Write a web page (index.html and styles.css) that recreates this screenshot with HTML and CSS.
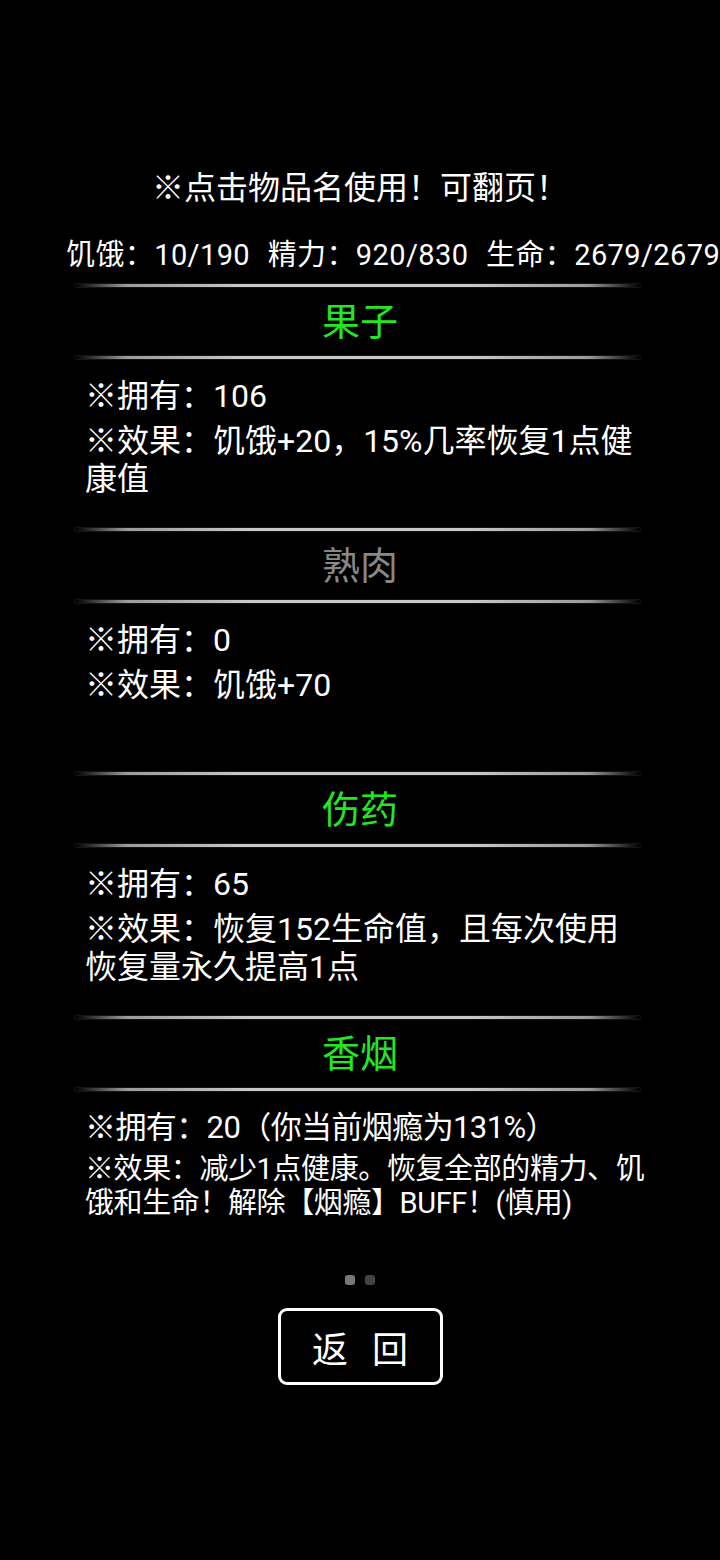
FILE: index.html
```html
<!DOCTYPE html>
<html lang="zh-CN">
<head>
    <meta charset="UTF-8">
    <meta name="viewport" content="width=device-width, initial-scale=1.0">
    <title>物品</title>
    <link rel="stylesheet" href="styles.css">
</head>
<body>
    <div class="page">
        <div class="tip">※点击物品名使用！可翻页！</div>
        <div class="stats">饥饿：10/190 精力：920/830 生命：2679/2679</div>

        <div class="item-list">
            <div class="item">
                <div class="divider"></div>
                <div class="item-name">果子</div>
                <div class="divider"></div>
                <div class="item-body">
                    <div class="item-own">※拥有：106</div>
                    <div class="item-effect">※效果：饥饿+20，15%几率恢复1点健康值</div>
                </div>
            </div>

            <div class="item">
                <div class="divider"></div>
                <div class="item-name disabled">熟肉</div>
                <div class="divider"></div>
                <div class="item-body">
                    <div class="item-own">※拥有：0</div>
                    <div class="item-effect">※效果：饥饿+70</div>
                </div>
            </div>

            <div class="item">
                <div class="divider"></div>
                <div class="item-name">伤药</div>
                <div class="divider"></div>
                <div class="item-body">
                    <div class="item-own">※拥有：65</div>
                    <div class="item-effect">※效果：恢复152生命值，且每次使用恢复量永久提高1点</div>
                </div>
            </div>

            <div class="item">
                <div class="divider"></div>
                <div class="item-name">香烟</div>
                <div class="divider"></div>
                <div class="item-body">
                    <div class="item-own narrow">※拥有：20（你当前烟瘾为131%）</div>
                    <div class="item-effect small">※效果：减少1点健康。恢复全部的精力、饥饿和生命！解除【烟瘾】BUFF！(慎用)</div>
                </div>
            </div>
        </div>

        <div class="pager">
            <span class="dot active"></span>
            <span class="dot"></span>
        </div>

        <button class="back-button">返 回</button>
    </div>
</body>
</html>
```

FILE: styles.css
```css
html, body {
    margin: 0;
    padding: 0;
    background-color: #000;
}

body {
    width: 720px;
    height: 1560px;
    overflow: hidden;
    color: #fff;
    font-family: Roboto, "Noto Sans CJK SC", sans-serif;
}

.page {
    display: flex;
    flex-direction: column;
    padding-top: 168px;
}

.tip {
    height: 40px;
    line-height: 40px;
    font-size: 32px;
    text-align: center;
}

.stats {
    margin-top: 27px;
    height: 40px;
    line-height: 40px;
    font-size: 29px;
    word-spacing: 10px;
    letter-spacing: 0.4px;
    padding-left: 66px;
    white-space: nowrap;
}

.item-list {
    display: flex;
    flex-direction: column;
    margin-top: 9px;
}

.item {
    display: flex;
    flex-direction: column;
    height: 244px;
}

.divider {
    height: 3px;
    margin: 0 80px 0 75px;
    background: linear-gradient(to right, rgba(200, 200, 200, 0), #9a9a9a 9%, #c8c8c8 30%, #c8c8c8 70%, #9a9a9a 91%, rgba(200, 200, 200, 0));
    box-shadow: 0 0 2px rgba(120, 120, 120, 0.6);
}

.item-name {
    height: 69px;
    line-height: 71px;
    text-align: center;
    font-size: 38px;
    color: #22e822;
}

.item-name.disabled {
    color: #888;
}

.item-body {
    padding: 18px 85px 0 85px;
    font-size: 32px;
}

.item-own {
    line-height: 38px;
}

.item-own.narrow {
    font-size: 31px;
    letter-spacing: -0.6px;
}

.item-effect {
    margin-top: 7px;
    line-height: 38px;
}

.item-effect.small {
    margin-top: 5px;
    margin-right: -14px;
    font-size: 29px;
    letter-spacing: -0.4px;
    line-height: 34px;
}

.pager {
    display: flex;
    justify-content: center;
    gap: 10px;
    margin-top: 15px;
}

.dot {
    width: 10px;
    height: 10px;
    border-radius: 3px;
    background-color: #444;
}

.dot.active {
    background-color: #777;
}

.back-button {
    align-self: center;
    margin-top: 23px;
    width: 165px;
    height: 77px;
    background-color: #000;
    color: #fff;
    border: 3px solid #fff;
    border-radius: 9px;
    font-family: Roboto, "Noto Sans CJK SC", sans-serif;
    font-size: 36px;
    word-spacing: 15px;
    padding: 0;
}
```
